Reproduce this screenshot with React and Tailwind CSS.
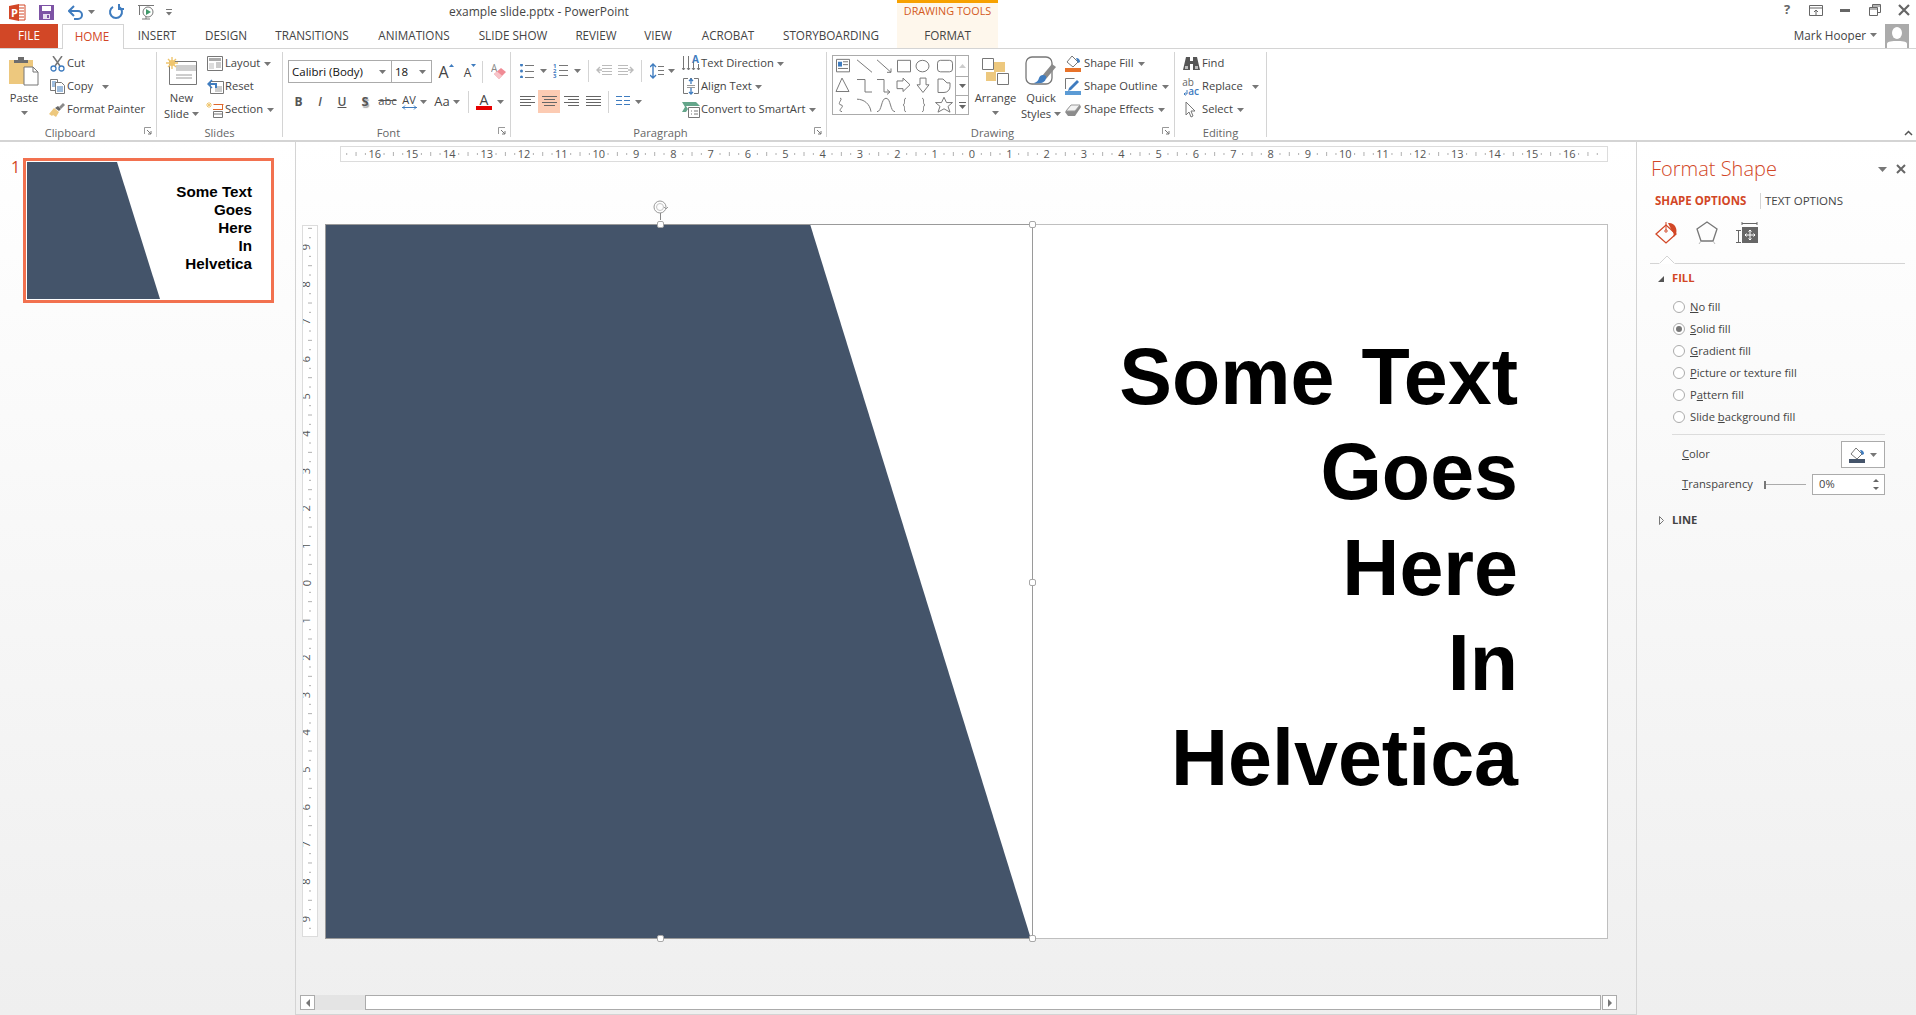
import React from "react";

const G = "#777";
const BL = "#3f7cbf";

const Svg = ({ w = 16, h = 16, children, className = "" }) => (
  <svg width={w} height={h} viewBox={`0 0 ${w} ${h}`} fill="none" className={"shrink-0 " + className}>
    {children}
  </svg>
);

const Caret = ({ color = "#777" }) => (
  <svg width="7" height="4" viewBox="0 0 7 4" className="shrink-0">
    <path d="M0 0h7L3.5 4z" fill={color} />
  </svg>
);

// quick access and window icons
const PptLogo = () => (
  <Svg w={17} h={17}>
    <path d="M9 1h7v15H9z" fill="#fff" stroke="#d24726" />
    <path d="M10 4h5M10 7h5M10 10h5M10 13h5" stroke="#d24726" />
    <path d="M0 2l10-2v17L0 15z" fill="#d24726" />
    <text x="2" y="13" fontSize="11" fontWeight="700" fill="#fff">P</text>
  </Svg>
);
const SaveIcon = () => (
  <Svg w={15} h={15}>
    <path d="M0 0h15v15H0z" fill="#7d53a5" />
    <path d="M3 1h9v5H3z" fill="#fff" />
    <path d="M4 9h7v5H4z" fill="#e8dff0" />
    <path d="M8 10h2v3H8z" fill="#7d53a5" />
  </Svg>
);
const UndoIcon = () => (
  <Svg w={16} h={15}>
    <path d="M2 6h8a4 4 0 0 1 0 8H6" stroke={BL} strokeWidth="2" />
    <path d="M6 1L1 6l5 5" stroke={BL} strokeWidth="2" />
  </Svg>
);
const RedoIcon = () => (
  <Svg w={16} h={16}>
    <path d="M5 2.8a6 6 0 1 0 6 0" stroke={BL} strokeWidth="2" />
    <path d="M11 0v5h5" stroke={BL} strokeWidth="2" />
  </Svg>
);
const ShowIcon = () => (
  <Svg w={16} h={17}>
    <path d="M0 1.5h16M1.5 2v9" stroke={G} />
    <path d="M4 15h8M8 12v3" stroke={G} />
    <circle cx="10" cy="8" r="5" fill="#fff" stroke={G} />
    <path d="M8 5l5 3-5 3z" fill="#3f9a6b" />
  </Svg>
);

// clipboard and slides
const PasteIcon = () => (
  <Svg w={30} h={30}>
    <path d="M0 4h24v24H0z" fill="#edc87e" />
    <path d="M5 4h14v3H5zM9 1h6v3H9z" fill="#6d6d6d" />
    <path d="M15 11h9l5 5v13H15z" fill="#fff" stroke={G} />
    <path d="M24 11v5h5" stroke={G} />
  </Svg>
);
const CutIcon = () => (
  <Svg w={15} h={16}>
    <path d="M3 0l7 10M12 0L5 10" stroke={G} strokeWidth="1.5" />
    <circle cx="3.5" cy="12.5" r="2.5" stroke={BL} strokeWidth="1.3" />
    <circle cx="11.5" cy="12.5" r="2.5" stroke={BL} strokeWidth="1.3" />
  </Svg>
);
const CopyIcon = () => (
  <Svg w={15} h={15}>
    <path d="M.5.5h7v11h-7z" fill="#fff" stroke={G} />
    <path d="M2 3h4M2 5h4M2 7h4" stroke={BL} />
    <path d="M5.5 3.5h6l3 3v8h-9z" fill="#fff" stroke={G} />
    <path d="M7 8h6M7 10h6M7 12h6" stroke={BL} />
  </Svg>
);
const PainterIcon = () => (
  <Svg w={16} h={14}>
    <path d="M0 11l5-6 5 4-3 5-3-2-1 1z" fill="#edc87e" />
    <path d="M6 5l3-2 3 3-2 2z" fill="#666" />
    <path d="M10 4l4-4 2 2-4 4z" fill="#8a8a8a" />
  </Svg>
);
const NewSlideIcon = () => (
  <Svg w={31} h={28}>
    <path d="M3.5 4.5h27v23h-27z" fill="#fff" stroke={G} />
    <path d="M10 8h20v6H10z" fill="#cfcfcf" />
    <path d="M10 18h16M10 21h16" stroke="#9a9a9a" />
    <path d="M6 0v12M0 6h12M2 2l8 8M10 2l-8 8" stroke="#efc56e" strokeWidth="1.4" />
    <circle cx="6" cy="6" r="3" fill="#efc56e" />
  </Svg>
);
const LayoutIcon = () => (
  <Svg w={16} h={15}>
    <path d="M.5.5h15v14H.5z" fill="#fff" stroke={G} />
    <path d="M2 2h12v3H2z" fill="#aaa" />
    <path d="M2 7h5v6H2z" fill="#ddd" />
    <path d="M9 7h5M9 9h5M9 11h5" stroke="#999" />
  </Svg>
);
const ResetIcon = () => (
  <Svg w={17} h={15}>
    <path d="M3.5 2.5h13v12h-13z" fill="#fff" stroke={G} />
    <path d="M8 8h7M8 10h7M8 12h7" stroke="#999" />
    <path d="M2 5h7v4" stroke={BL} strokeWidth="2" />
    <path d="M5 1L1 5l4 4" stroke={BL} strokeWidth="1.5" />
  </Svg>
);
const SectionIcon = () => (
  <Svg w={18} h={16}>
    <path d="M3 0v6M0 3h6M1 1l4 4M5 1L1 5" stroke="#efc56e" />
    <path d="M7.5 2.5h10M16.5 2.5v5M7 7.5h10" stroke="#e0682c" />
    <path d="M7.5 9.5h9v6h-9z" fill="#fff" stroke={G} />
    <path d="M8 12h8" stroke={G} />
  </Svg>
);

// font
const EraseIcon = () => (
  <Svg w={16} h={18}>
    <text x="0" y="9" fontSize="10" fill="#888">A</text>
    <path d="M3 11l7-6 5 4-7 7z" fill="#f08a94" />
    <path d="M3 11l3-2.5 5 4L8 16z" fill="#f7c4c9" />
  </Svg>
);
const Bullets = () => (
  <Svg w={14} h={14}>
    {[1, 7, 13].map((y) => <circle key={y} cx="1.5" cy={y} r="1.5" fill={BL} />)}
    {[1, 7, 13].map((y) => <path key={y} d={`M5 ${y + 0.5}h9`} stroke={G} />)}
  </Svg>
);
const Numbers = () => (
  <Svg w={15} h={15}>
    {[0, 1, 2].map((i) => <text key={i} x="0" y={5 + i * 5} fontSize="6" fontWeight="700" fill={BL}>{i + 1}</text>)}
    {[2, 7, 12].map((y) => <path key={y} d={`M6 ${y + 0.5}h9`} stroke={G} />)}
  </Svg>
);
const Indent = ({ flip }) => (
  <Svg w={16} h={13} className={flip ? "-scale-x-100" : ""}>
    {[1, 4, 7, 10].map((y) => <path key={y} d={`M6 ${y + 0.5}h10`} stroke="#bcbcbc" />)}
    <path d="M6 6H1M4 3L1 6l3 3" stroke="#bcbcbc" strokeWidth="1.4" />
  </Svg>
);
const LineSpacing = () => (
  <Svg w={14} h={16}>
    <path d="M3 1v14M0 4l3-3 3 3M0 12l3 3 3-3" stroke={BL} strokeWidth="1.4" />
    <path d="M8 3.5h6M8 7.5h6M8 11.5h6" stroke={G} />
  </Svg>
);
const Align = ({ type }) => {
  const short = { left: [0, 11], center: [2, 11], right: [4, 11], justify: [0, 15] }[type];
  const rows = [[0, 15], short, [0, 15], short];
  return (
    <Svg w={15} h={11}>
      {rows.map(([x, w], i) => <path key={i} d={`M${x} ${i * 3 + 0.5}h${w}`} stroke="#666" />)}
    </Svg>
  );
};
const Columns = () => (
  <Svg w={14} h={11}>
    {[0, 4, 8].map((y) => <path key={y} d={`M0 ${y + 0.5}h6M8 ${y + 0.5}h6`} stroke={BL} strokeWidth="1.2" />)}
  </Svg>
);
const TextDirIcon = () => (
  <Svg w={18} h={17}>
    <path d="M1.5 1v14M6.5 1v14M11.5 6v9" stroke={G} />
    <path d="M0 13l1.5 2 1.5-2M5 13l1.5 2 1.5-2M10 13l1.5 2 1.5-2M15 13l1.5 2 1.5-2" stroke={G} />
    <path d="M16.5 9v6" stroke={G} />
    <text x="10" y="8" fontSize="10" fontWeight="700" fill={BL}>A</text>
  </Svg>
);
const AlignTextIcon = () => (
  <Svg w={16} h={17}>
    <path d="M3 .5H.5v15H3M13 .5h2.5v15H13" stroke={G} />
    <path d="M3 .5h10M3 15.5h10" stroke={G} strokeDasharray="2 2" />
    <path d="M8 1v5M6 3l2-2 2 2M8 10v6M6 14l2 2 2-2" stroke={BL} strokeWidth="1.3" />
    <path d="M4 7.5h8M4 9.5h8" stroke="#999" />
  </Svg>
);
const SmartArtIcon = () => (
  <Svg w={18} h={16}>
    <path d="M0 0h14l4 4H4l2 3-2 3H0l3-5z" fill="#64a58a" />
    <path d="M6.5 5.5h11v10h-11z" fill="#fff" stroke={G} />
    <path d="M9 9h1M12 9h4M9 12h1M12 12h4" stroke={G} />
  </Svg>
);

// gallery of shapes
const Gallery = () => (
  <Svg w={122} h={58}>
    <g stroke="#777" fill="none" transform="scale(1 .96)">
      <path d="M3.5 3.5h13v13h-13z" />
      <path d="M5 6h4v5H5z" fill={BL} stroke="none" />
      <path d="M10 6h5M10 9h5M5 13h10" />
      <path d="M24 4l15 13M44 4l14 13M58 17v-4M58 17h-4" />
      <path d="M64.5 4.5h13v12h-13zM96 10.5a6.5 6 0 1 1-13 0a6.5 6 0 1 1 13 0z" />
      <rect x="104.5" y="4.5" width="15" height="12" rx="3" />
      <path d="M9 23l7 14H3z" />
      <path d="M24 24.500h8v13h7M44 24.500h7v13h5M54 35l3 2.500-3 2.500" />
      <path d="M64 26h6v-3l7 7-7 7v-3h-6zM87 23h6v7h3l-6 8-6-8h3z" />
      <path d="M105 24h5l4 4h3v4a6 6 0 0 1-6 6h-6z" />
      <path d="M7 44c4 0-4 6 1 7s-5 6 1 7" />
      <path d="M24 45c7 0 13 5 14 13M44 58c5 0 4-14 9-14s4 14 9 14" />
      <path d="M73 44c-3 0 0 6-3 7c3 1 0 7 3 7M89 44c3 0 0 6 3 7c-3 1 0 7-3 7" />
      <path d="M111 43l2.500 5.500h6l-4.500 4 2 6-6-3.500-6 3.500 2-6-4.500-4h6z" />
    </g>
  </Svg>
);
const ArrangeIcon = () => (
  <Svg w={28} h={27}>
    <path d="M12 4h11v10H12zM4 14h10v9H4z" fill="#edc87e" />
    <path d="M.5.5h11v11H.5zM15.500 15.500h11v11h-11z" fill="#fff" stroke={G} />
  </Svg>
);
const QuickIcon = () => (
  <Svg w={32} h={31}>
    <rect x="1" y="1" width="26" height="27" rx="6" fill="#fff" stroke={G} strokeWidth="1.3" />
    <path d="M17 20l10-12 4 3-10 12z" fill="#8a8a8a" />
    <path d="M14 22c1-3 4-4 7-2 1 3-2 7-5 7s-6 1-7 0c3-1 4-2 5-5z" fill={BL} />
  </Svg>
);
const BucketIcon = ({ color = "#e8732a", bar = true, w = 16, h = 17 }) => (
  <Svg w={w} h={h}>
    <path d="M2 7l5-6 6 6-5 5z" fill="#fff" stroke={G} />
    <path d="M11 3c3 0 4 2 4 4l-2 1z" fill={BL} />
    {bar && <path d={`M0 ${h - 4}h${w}v4H0z`} fill={color} />}
  </Svg>
);
const OutlineIcon = () => (
  <Svg w={16} h={17}>
    <path d="M.5 11V.5h9" stroke={G} />
    <path d="M4 10l8-8 2 2-8 8-3 1z" fill={BL} />
    <path d="M0 13h16v4H0z" fill="#5b9bd5" />
  </Svg>
);
const EffectsIcon = () => (
  <Svg w={16} h={14}>
    <path d="M3 13L0 9l6-7h9l1 2-6 9z" fill="#8c8c8c" />
    <path d="M1 8l5-6h9l-5 6z" fill="#f2f2f2" stroke="#999" />
  </Svg>
);
const FindIcon = () => (
  <Svg w={17} h={15}>
    <path d="M3 1h4v4h3V1h4l3 13h-7V8H7v6H0z" fill="#555" />
    <path d="M2 10h3v3H2zM12 10h3v3h-3z" fill="#bbb" />
  </Svg>
);
const ReplaceIcon = () => (
  <span className="relative flex h-[18px] w-[16px] flex-col text-[10px] leading-[9px]">
    <span className="self-end pr-[5px] text-[#666]">ab</span>
    <span className="self-end font-semibold text-[#3f7cbf] leading-[9px]">ac</span>
    <Svg w={5} h={6} className="absolute bottom-0 left-0">
      <path d="M4 0v4H1M2.500 2.500L1 4l1.500 1.500" stroke={BL} />
    </Svg>
  </span>
);
const SelectIcon = () => (
  <Svg w={12} h={17}>
    <path d="M1 1v13l3-3 2 5 2-1-2-5h4z" fill="#fff" stroke={G} />
  </Svg>
);

const Launcher = () => (
  <Svg w={8} h={8} className="absolute bottom-[2px] right-[4px]">
    <path d="M.5 7V.5H7" stroke="#999" />
    <path d="M3 3l4 4M7 4v3H4" stroke={G} />
  </Svg>
);

const Divider = ({ h = "h-[22px]" }) => <div className={"w-px shrink-0 bg-[#d4d4d4] " + h} />;
const Sp = ({ w }) => <div style={{ width: w }} className="shrink-0" />;

function Cell({ w, children, className = "" }) {
  return (
    <div style={{ width: w }} className={"flex h-full shrink-0 items-center justify-center " + className}>
      {children}
    </div>
  );
}

function Group({ label, width, launcher, children }) {
  return (
    <div style={{ width }} className="relative h-[85px] shrink-0 border-r border-[#d4d4d4]">
      <div className="flex h-[74px]">{children}</div>
      <div className={"h-[14px] text-center leading-[14px] text-[#666] " + (launcher ? "pr-[16px]" : "")}>{label}</div>
      {launcher && <Launcher />}
    </div>
  );
}

function Row({ icon, label, caret, caretGap = 4, gap = 1 }) {
  return (
    <div className="flex h-[23px] items-center">
      <div style={{ marginRight: gap }} className="flex w-[18px] shrink-0 justify-center">{icon}</div>
      <span className="whitespace-nowrap">{label}</span>
      {caret && <span style={{ marginLeft: caretGap }}><Caret /></span>}
    </div>
  );
}

function BigBtn({ w, icon, lines, caretLine }) {
  return (
    <div style={{ width: w }} className="flex shrink-0 flex-col items-center">
      <div className="flex h-[38px] items-center justify-center">{icon}</div>
      {lines.map((l) => <div key={l} className="h-[16px] leading-[16px]">{l}</div>)}
      {caretLine}
    </div>
  );
}

const tabs = [
  ["INSERT", 66],
  ["DESIGN", 72],
  ["TRANSITIONS", 100],
  ["ANIMATIONS", 104],
  ["SLIDE SHOW", 94],
  ["REVIEW", 72],
  ["VIEW", 52],
  ["ACROBAT", 88],
  ["STORYBOARDING", 118],
];

const rulerX = 631;
const step = 37.33;

function HRuler() {
  const units = Array.from({ length: 35 }, (_, i) => i - 17);
  return (
    <svg width="1266" height="14" className="block bg-white outline outline-1 outline-[#dcdcdc]">
      {units.map((u) => {
        const x = rulerX + u * step;
        return (
          <g key={u}>
            {Math.abs(u) <= 16 && (
              <text x={x} y="11" textAnchor="middle" fontSize="11" fill="#555">{Math.abs(u)}</text>
            )}
            <path d={`M${x + step / 4} 6v2M${x + (3 * step) / 4} 6v2`} stroke="#b0b0b0" />
            <path d={`M${x + step / 2} 5v4`} stroke="#b0b0b0" />
          </g>
        );
      })}
    </svg>
  );
}

function VRuler() {
  const units = Array.from({ length: 21 }, (_, i) => i - 10);
  const y0 = 357;
  return (
    <svg width="14" height="710" className="mt-[2px] block shrink-0 bg-white outline outline-1 outline-[#dcdcdc]">
      {units.map((u) => {
        const y = y0 + u * step;
        return (
          <g key={u}>
            {Math.abs(u) <= 9 && (
              <text x="11.5" y={y} textAnchor="middle" fontSize="11" fill="#555" transform={`rotate(-90 7.5 ${y}) translate(-4 0)`}>{Math.abs(u)}</text>
            )}
            <path d={`M6 ${y + step / 4}h2M6 ${y + (3 * step) / 4}h2`} stroke="#b0b0b0" />
            <path d={`M5 ${y + step / 2}h4`} stroke="#b0b0b0" />
          </g>
        );
      })}
    </svg>
  );
}

const Handle = ({ className }) => (
  <div className={"absolute h-[7px] w-[7px] rounded-[2px] border border-[#a8a8a8] bg-white " + className} />
);

const slideLines = ["Some Text", "Goes", "Here", "In", "Helvetica"];

const radios = [
  ["", "N", "o fill"],
  ["", "S", "olid fill"],
  ["", "G", "radient fill"],
  ["", "P", "icture or texture fill"],
  ["P", "a", "ttern fill"],
  ["Slide ", "b", "ackground fill"],
];

export default function App() {
  return (
    <div className="flex h-[1015px] w-[1916px] flex-col overflow-hidden bg-white font-['Open_Sans',sans-serif] text-[11.2px] text-[#444]">
      {/* titlebar */}
      <div className="flex h-[24px] shrink-0">
        <div className="flex w-[449px] shrink-0 items-center pl-[9px]">
          <PptLogo />
          <Sp w={13} />
          <SaveIcon />
          <Sp w={14} />
          <UndoIcon />
          <Sp w={4} />
          <Caret />
          <Sp w={13} />
          <RedoIcon />
          <Sp w={14} />
          <ShowIcon />
          <Sp w={12} />
          <Svg w={6} h={7}>
            <path d="M0 .5h6" stroke={G} />
            <path d="M0 3h6L3 6.500z" fill={G} />
          </Svg>
        </div>
        <div className="flex w-[448px] shrink-0 items-center pb-[1px] text-[12px]">example slide.pptx - PowerPoint</div>
        <div className="flex w-[101px] shrink-0 items-center justify-center border-t-[3px] border-[#f7a100] bg-[#fef7ec] pb-[4px] text-[10.8px] text-[#d35a1d]">
          DRAWING TOOLS
        </div>
        <div className="flex flex-1 items-center justify-end pb-[4px] pr-[6px]">
          <div className="flex w-[16px] justify-center text-[13px] font-bold text-[#666]">?</div>
          <Sp w={14} />
          <Svg w={14} h={11}>
            <path d="M.5.5h13v10H.5zM0 3h14" stroke="#666" />
            <path d="M7 10V5M5 7l2-2 2 2" stroke="#666" />
          </Svg>
          <Sp w={17} />
          <Svg w={10} h={3}><path d="M0 0h10v3H0z" fill="#666" /></Svg>
          <Sp w={19} />
          <Svg w={12} h={12}>
            <path d="M3.500.5h8v8h-8zM3 2h9" stroke="#666" />
            <path d="M.5 3.500h8v8h-8z" fill="#fff" stroke="#666" />
            <path d="M0 5h9" stroke="#666" />
          </Svg>
          <Sp w={17} />
          <Svg w={12} h={12}><path d="M1 1l10 10M11 1L1 11" stroke="#666" strokeWidth="2.2" /></Svg>
        </div>
      </div>

      {/* tabs */}
      <div className="relative flex h-[25px] shrink-0 border-b border-[#d4d4d4] text-[11.7px]">
        <div className="flex h-[24px] w-[58px] items-center justify-center bg-[#d24726] text-white">FILE</div>
        <Sp w={4} />
        <div className="z-10 flex h-[25px] w-[62px] items-center justify-center border border-b-0 border-[#d4d4d4] bg-white pr-[2px] text-[#d24726]">HOME</div>
        {tabs.map(([t, w]) => (
          <div key={t} style={{ width: w }} className="flex items-center justify-center">{t}</div>
        ))}
        <Sp w={7} />
        <div className="flex w-[101px] items-center justify-center bg-[#fef7ec]">FORMAT</div>
        <div className="flex flex-1 items-start justify-end">
          <span className="mr-[4px] mt-[3px] whitespace-nowrap">Mark Hooper</span>
          <span className="mr-[8px] mt-[9px]"><Caret /></span>
          <div className="mr-[7px] h-[24px] w-[24px] overflow-hidden bg-[#ababab]">
            <Svg w={24} h={24}>
              <ellipse cx="12" cy="9" rx="5" ry="6" fill="#fff" />
              <path d="M2 24v-4c0-3 6-3 10-3s10 0 10 3v4z" fill="#fff" />
            </Svg>
          </div>
        </div>
      </div>

      {/* ribbon */}
      <div className="relative flex h-[93px] shrink-0 border-b-2 border-[#d4d4d4] pt-[3px]">
        <Group label="Clipboard" width={157} launcher>
          <BigBtn
            w={48}
            icon={<PasteIcon />}
            lines={["Paste"]}
            caretLine={<div className="mt-[5px]"><Caret /></div>}
          />
          <div>
            <Row icon={<CutIcon />} label="Cut" />
            <Row icon={<CopyIcon />} label="Copy" caret caretGap={9} />
            <Row icon={<PainterIcon />} label="Format Painter" />
          </div>
        </Group>

        <Group label="Slides" width={126}>
          <BigBtn
            w={49}
            icon={<NewSlideIcon />}
            lines={["New"]}
            caretLine={
              <div className="flex h-[16px] items-center gap-[3px]">
                Slide <Caret />
              </div>
            }
          />
          <div>
            <Row icon={<LayoutIcon />} label="Layout" caret />
            <Row icon={<ResetIcon />} label="Reset" />
            <Row icon={<SectionIcon />} label="Section" caret />
          </div>
        </Group>

        <Group label="Font" width={228} launcher>
          <div className="pl-[5px]">
            <div className="mt-[8px] flex h-[23px] items-center text-[11.5px]">
              <div className="flex h-full w-[104px] items-center justify-between border border-[#ababab] bg-white pl-[3px] pr-[5px] text-[#111]">
                Calibri (Body) <Caret />
              </div>
              <div className="flex h-full w-[40px] items-center justify-between border border-l-0 border-[#ababab] bg-white pl-[3px] pr-[5px] text-[#111]">
                18 <Caret />
              </div>
              <Cell w={28}>
                <span className="text-[16px] leading-[20px]">A</span>
                <Svg w={5} h={8} className="-mt-[8px]"><path d="M0 3h5L2.500 0z" fill={BL} /></Svg>
              </Cell>
              <Cell w={20}>
                <span className="mt-[2px] text-[12px] leading-[16px]">A</span>
                <Svg w={5} h={8} className="-mt-[8px]"><path d="M0 0h5L2.500 3z" fill={BL} /></Svg>
              </Cell>
              <Sp w={2} />
              <Divider />
              <Sp w={8} />
              <EraseIcon />
            </div>
            <div className="mt-[7px] flex h-[23px] items-center">
              <Cell w={21} className="font-bold text-[12px] text-[#555]">B</Cell>
              <Cell w={22} className="italic text-[12px] font-semibold text-[#555]">I</Cell>
              <Cell w={22} className="font-semibold text-[12px] text-[#555] underline">U</Cell>
              <Cell w={24} className="text-[13px] font-bold text-[#555] [text-shadow:1px_2px_1px_#aaa]">S</Cell>
              <Cell w={21} className="text-[#555] line-through">abc</Cell>
              <Cell w={22}>
                <div className="flex flex-col items-center">
                  <span className="h-[11px] text-[11px] leading-[11px]">AV</span>
                  <Svg w={15} h={5}><path d="M0 2.500h15M3 .5L1 2.500l2 2M12 .5l2 2-2 2" stroke={BL} /></Svg>
                </div>
              </Cell>
              <Cell w={6}><Caret /></Cell>
              <Sp w={4} />
              <Cell w={24} className="text-[13px]">Aa</Cell>
              <Cell w={5}><Caret /></Cell>
              <Sp w={9} />
              <Divider />
              <Sp w={5} />
              <Cell w={20}>
                <div className="flex flex-col items-center">
                  <span className="h-[13px] text-[14px] leading-[13px]">A</span>
                  <div className="h-[4px] w-[16px] bg-[#e60000]" />
                </div>
              </Cell>
              <Sp w={3} />
              <Cell w={6}><Caret /></Cell>
            </div>
          </div>
        </Group>

        <Group label="Paragraph" width={316} launcher>
          <div className="w-[171px] shrink-0 pl-[6px]">
            <div className="mt-[7px] flex h-[23px] items-center">
              <Cell w={20}><Bullets /></Cell>
              <Cell w={12}><Caret /></Cell>
              <Cell w={22}><Numbers /></Cell>
              <Cell w={12}><Caret /></Cell>
              <Sp w={5} />
              <Divider />
              <Sp w={4} />
              <Cell w={22}><Indent /></Cell>
              <Cell w={22}><Indent flip /></Cell>
              <Sp w={4} />
              <Divider />
              <Sp w={5} />
              <Cell w={20}><LineSpacing /></Cell>
              <Cell w={8}><Caret /></Cell>
            </div>
            <div className="mt-[8px] flex h-[23px] items-center">
              <Cell w={21}><Align type="left" /></Cell>
              <Cell w={22} className="bg-[#fccbb3]"><Align type="center" /></Cell>
              <Cell w={22}><Align type="right" /></Cell>
              <Cell w={22}><Align type="justify" /></Cell>
              <Sp w={4} />
              <Divider />
              <Sp w={4} />
              <Cell w={20}><Columns /></Cell>
              <Cell w={10}><Caret /></Cell>
            </div>
          </div>
          <div>
            <Row icon={<TextDirIcon />} label="Text Direction" caret caretGap={3} />
            <Row icon={<AlignTextIcon />} label="Align Text" caret caretGap={3} />
            <Row icon={<SmartArtIcon />} label="Convert to SmartArt" caret caretGap={3} />
          </div>
        </Group>

        <Group label="Drawing" width={348} launcher>
          <div className="ml-[5px] mt-[3px] flex h-[60px] w-[137px] shrink-0 border border-[#ababab] bg-white">
            <div className="w-[122px]"><Gallery /></div>
            <div className="flex flex-1 flex-col border-l border-[#ababab]">
              <div className="flex h-[20px] items-center justify-center"><Svg w={7} h={4}><path d="M0 4h7L3.500 0z" fill="#ccc" /></Svg></div>
              <div className="flex h-[20px] items-center justify-center border-y border-[#ababab]"><Caret color="#666" /></div>
              <div className="flex flex-1 flex-col items-center justify-center gap-[2px]">
                <div className="h-px w-[7px] bg-[#666]" />
                <Caret color="#666" />
              </div>
            </div>
          </div>
          <Sp w={4} />
          <BigBtn
            w={45}
            icon={<ArrangeIcon />}
            lines={["Arrange"]}
            caretLine={<div className="mt-[5px]"><Caret /></div>}
          />
          <BigBtn
            w={46}
            icon={<QuickIcon />}
            lines={["Quick"]}
            caretLine={
              <div className="flex h-[16px] items-center gap-[3px]">
                Styles <Caret />
              </div>
            }
          />
          <div>
            <Row icon={<BucketIcon />} label="Shape Fill" caret gap={2} />
            <Row icon={<OutlineIcon />} label="Shape Outline" caret gap={2} />
            <Row icon={<EffectsIcon />} label="Shape Effects" caret gap={2} />
          </div>
        </Group>

        <Group label="Editing" width={92}>
          <div className="pl-[7px]">
            <Row icon={<FindIcon />} label="Find" gap={2} />
            <Row icon={<ReplaceIcon />} label="Replace" caret caretGap={9} gap={2} />
            <Row icon={<SelectIcon />} label="Select" caret gap={2} />
          </div>
        </Group>

        <Svg w={9} h={6} className="absolute bottom-[4px] right-[3px]">
          <path d="M1 5l3.500-3.500L8 5" stroke="#555" strokeWidth="1.5" />
        </Svg>
      </div>

      {/* work area */}
      <div className="flex flex-1 bg-linear-to-b from-white to-[#efefef]">
        {/* slide thumbnails */}
        <div className="flex w-[296px] shrink-0 items-start border-r border-[#d4d4d4] pl-[11px] pt-[16px]">
          <div className="w-[12px] text-[16px] leading-[18px] text-[#d24726]">1</div>
          <div className="relative h-[145px] w-[251px] border-[3px] border-[#f2714f] bg-white p-px">
            <svg width="243" height="137" className="absolute left-[1px] top-[1px]">
              <polygon points="0,0 90,0 133,137 0,137" fill="#44546a" />
            </svg>
            <div className="relative pr-[18px] pt-[21px] text-right font-['Liberation_Sans',sans-serif] text-[15.2px] font-bold leading-[18px] text-black">
              {slideLines.map((l) => <div key={l}>{l}</div>)}
            </div>
          </div>
        </div>

        {/* editor */}
        <div className="flex w-[1341px] shrink-0 flex-col border-b border-r border-[#d4d4d4]">
          <div className="ml-[45px] mt-[5px]"><HRuler /></div>
          <div className="mt-[63px] flex">
            <div className="ml-[7px]"><VRuler /></div>
            <Sp w={8} />
            <div className="relative h-[715px] w-[1283px] border border-[#bfbfbf] bg-white">
              <svg width="708" height="715" className="absolute -left-px -top-px">
                <polygon points="0,0 485,0 706,715 0,715" fill="#44546a" />
              </svg>
              <div className="relative pr-[89px] pt-[104px] text-right font-['Liberation_Sans',sans-serif] text-[79px] font-bold leading-[95.3px] text-black [word-spacing:5px]">
                {slideLines.map((l) => <div key={l}>{l}</div>)}
              </div>
              {/* selection frame */}
              <div className="absolute -left-px -top-px h-[715px] w-[708px] border border-[#9a9a9a]" />
              <Handle className="left-[331px] -top-[4px]" />
              <Handle className="-top-[4px] left-[703px]" />
              <Handle className="left-[703px] top-[354px]" />
              <Handle className="left-[331px] -bottom-[4px]" />
              <Handle className="-bottom-[4px] left-[703px]" />
              <Svg w={17} h={20} className="absolute -top-[25px] left-[326px]">
                <circle cx="8" cy="7" r="6" stroke="#9a9a9a" />
                <circle cx="8" cy="7" r="3.500" stroke="#c4c4c4" />
                <path d="M8.500 13v7" stroke="#888" />
                <path d="M12 7l2 2 2-2" stroke="#9a9a9a" />
              </Svg>
            </div>
          </div>

          {/* scrollbar */}
          <div className="ml-[4px] mt-[56px] flex h-[15px] w-[1317px]">
            <div className="flex w-[15px] items-center justify-center border border-[#ababab] bg-white">
              <Svg w={4} h={8}><path d="M4 0v8L0 4z" fill="#777" /></Svg>
            </div>
            <div className="w-[50px] bg-[#e4e4e4]" />
            <div className="flex-1 border border-[#ababab] bg-white" />
            <Sp w={1} />
            <div className="flex w-[15px] items-center justify-center border border-[#ababab] bg-white">
              <Svg w={4} h={8}><path d="M0 0v8l4-4z" fill="#777" /></Svg>
            </div>
          </div>
        </div>

        {/* format pane */}
        <div className="flex-1 text-[11.2px]">
          <div className="mt-[14px] flex h-[26px] items-center">
            <div className="ml-[14px] flex-1 text-[20px] font-light text-[#d24726]">Format Shape</div>
            <Svg w={9} h={5}><path d="M0 0h9L4.500 5z" fill="#777" /></Svg>
            <Sp w={9} />
            <Svg w={10} h={10}><path d="M1 1l8 8M9 1L1 9" stroke="#666" strokeWidth="2" /></Svg>
            <Sp w={10} />
          </div>
          <div className="mt-[11px] flex h-[16px] items-center pl-[18px] text-[11.5px]">
            <span className="w-[105px] font-bold text-[#d24726]">SHAPE OPTIONS</span>
            <div className="h-[16px] w-px bg-[#d4d4d4]" />
            <span className="ml-[4px]">TEXT OPTIONS</span>
          </div>
          <div className="mt-[11px] flex h-[26px] items-center">
            <Sp w={18} />
            <Svg w={24} h={24}>
              <path d="M1 13l10-9 10 9-10 9z" stroke="#d24726" strokeWidth="1.3" />
              <path d="M11 1v8" stroke="#d24726" />
              <circle cx="11" cy="10" r="1.200" stroke="#d24726" />
              <path d="M13 2c6-1 10 5 8 11-1 2-2 3-3 3 1-2 1-4-1-6z" fill="#d24726" />
            </Svg>
            <Sp w={17} />
            <Svg w={22} h={24}>
              <path d="M11 1l10 7-4 12H5L1 8z" stroke="#777" strokeWidth="1.300" />
              <path d="M5 20l-2 3M17 20l2 3" stroke="#bbb" />
            </Svg>
            <Sp w={18} />
            <Svg w={22} h={22}>
              <path d="M6 1.500h15M6 0v3M21 0v3M0 8.500h5M0 20.500h5M2.500 8v13" stroke="#666" />
              <path d="M6 5h16v16H6z" fill="#666" />
              <path d="M14 8v10M9 13h10M12.500 9.500L14 8l1.500 1.500M12.500 16.500L14 18l1.500-1.500M10.500 11.500L9 13l1.500 1.500M17.500 11.500L19 13l-1.500 1.500" stroke="#fff" />
            </Svg>
          </div>
          <div className="relative mt-[17px] ml-[13px] h-px w-[255px] bg-[#d4d4d4]">
            <svg width="16" height="8" className="absolute -top-[7px] left-[9px]">
              <path d="M0 8L8 0l8 8z" fill="#fff" />
              <path d="M1 7l7-7 7 7" stroke="#d4d4d4" fill="none" />
            </svg>
          </div>
          <div className="mt-[8px] flex h-[13px] items-center">
            <Sp w={21} />
            <Svg w={6} h={6}><path d="M6 0v6H0z" fill="#555" /></Svg>
            <span className="ml-[8px] font-bold text-[#d24726]">FILL</span>
          </div>
          <div className="mt-[11px]">
            {radios.map(([pre, key, post], i) => (
              <div key={post} className="ml-[36px] flex h-[22px] items-center">
                <div className="flex h-[12px] w-[12px] items-center justify-center rounded-full border border-[#ababab] bg-white">
                  {i === 1 && <div className="h-[6px] w-[6px] rounded-full bg-[#777]" />}
                </div>
                <span className="ml-[5px]">{pre}<u>{key}</u>{post}</span>
              </div>
            ))}
          </div>
          <div className="ml-[35px] mt-[6px] h-px w-[213px] bg-[#dcdcdc]" />
          <div className="ml-[45px] mt-[6px] flex h-[27px] items-center">
            <span className="w-[159px]"><u>C</u>olor</span>
            <div className="flex h-full w-[44px] items-center justify-center gap-[5px] border border-[#ababab] bg-white">
              <BucketIcon color="#44546a" w={16} h={16} />
              <Caret />
            </div>
          </div>
          <div className="ml-[45px] mt-[6px] flex h-[21px] items-center">
            <span className="w-[82px]"><u>T</u>ransparency</span>
            <div className="h-[8px] w-[2px] bg-[#777]" />
            <div className="h-px w-[40px] bg-[#ababab]" />
            <Sp w={6} />
            <div className="flex h-full w-[73px] items-center justify-between border border-[#ababab] bg-white pl-[6px] pr-[5px]">
              0%
              <div className="flex flex-col gap-[5px]">
                <Svg w={6} h={3}><path d="M0 3h6L3 0z" fill="#666" /></Svg>
                <Svg w={6} h={3}><path d="M0 0h6L3 3z" fill="#666" /></Svg>
              </div>
            </div>
          </div>
          <div className="mt-[18px] flex h-[14px] items-center">
            <Sp w={22} />
            <Svg w={5} h={9}><path d="M.5 .5l4 4-4 4z" stroke="#777" /></Svg>
            <span className="ml-[8px] font-bold">LINE</span>
          </div>
        </div>
      </div>
    </div>
  );
}
